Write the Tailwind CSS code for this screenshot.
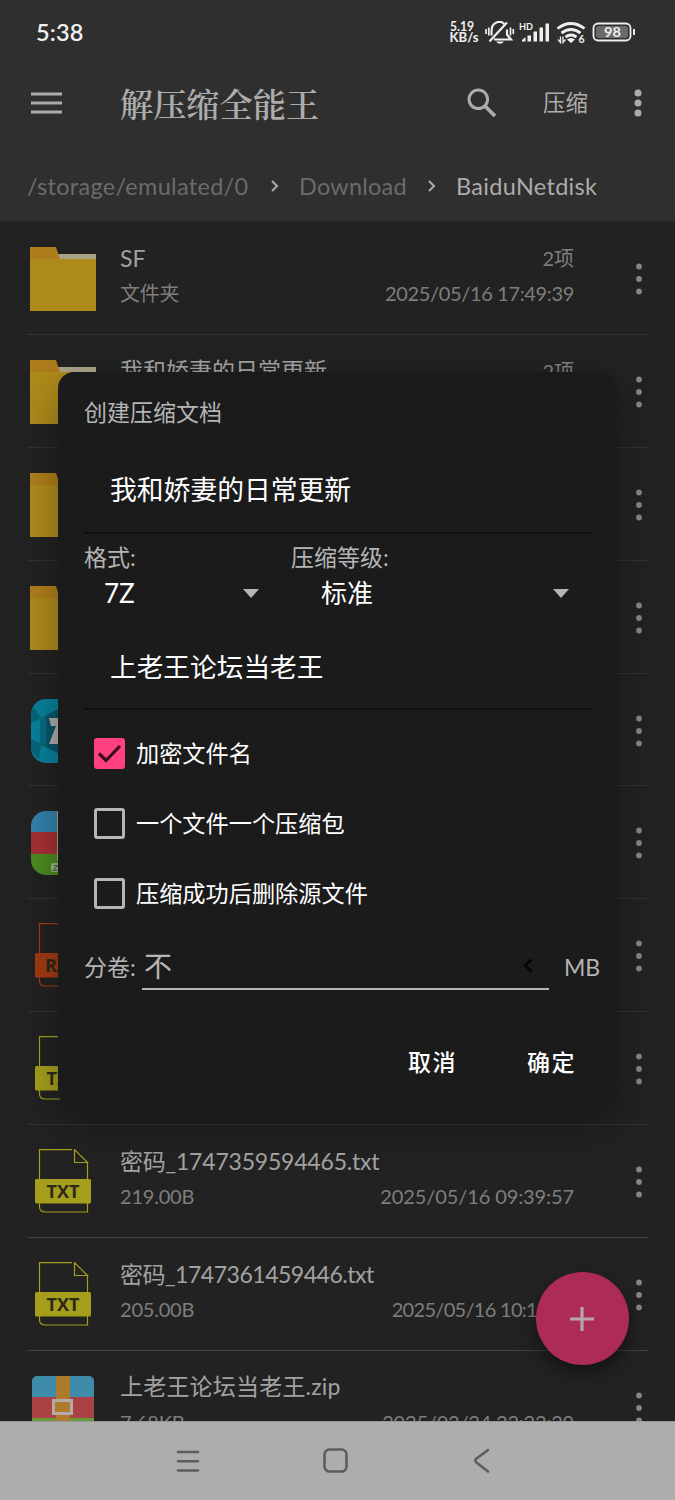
<!DOCTYPE html>
<html lang="zh-CN">
<head>
<meta charset="utf-8">
<title>解压缩全能王</title>
<script src="https://cdn.jsdelivr.net/npm/@tailwindcss/browser@4"></script>
</head>
<body class="bg-[#222222]">
<svg class="absolute size-0">
  <defs>
    <symbol id="folder" viewBox="0 0 66 64"><path d="M20 7h46v12H20z" fill="#aaa287"/><path d="M0 0h26l4 12v10H0z" fill="#ae7d1c"/><path d="M0 12h66v52H0z" fill="#ae8a1b"/></symbol>
    <symbol id="seven" viewBox="0 0 66 64"><rect x="1" width="64" height="64" rx="15" fill="#08809b"/><path d="M4 9l7 10-10 5V12zM1 40l10 5-2 15-8-8z" fill="#056579"/><path d="M10 20l23-13 23 13v24L33 57 10 45z" fill="#075567"/><path d="M10 20l6-3v30l-6-3z" fill="#066a80"/><path d="M19 19h29v8L37 44h10v1H19l7-18h-5z" fill="#aaa"/></symbol>
    <symbol id="rarapp" viewBox="0 0 66 64"><clipPath id="rc"><rect x="1" width="64" height="64" rx="15"/></clipPath><g clip-path="url(#rc)"><path d="M0 0h66v21H0z" fill="#3480ab"/><path d="M0 21h66v22H0z" fill="#a43036"/><path d="M0 43h66v21H0z" fill="#4b8b20"/><path d="M27 0h12v50H27z" fill="#aaa287"/></g><rect x="21" y="52" width="24" height="9" rx="2" fill="#9db28c"/><path d="M23.500 54.500h4l-4 5h4" fill="none" stroke="#4b6b30" stroke-width="1.200"/></symbol>
    <symbol id="doc" viewBox="0 0 66 64"><path d="M42 .6H9.500V58q0 5 6 5H57.500V14M44.500 .6V13.500H57.500z" fill="none" stroke="currentColor" stroke-width="1.200"/><rect x="5" y="30" width="56" height="24.500" rx="1.500" fill="currentColor"/></symbol>
    <symbol id="zip" viewBox="0 0 66 64"><clipPath id="zc"><rect x="2" width="62" height="64" rx="5"/></clipPath><g clip-path="url(#zc)"><path d="M0 0h66v21H0z" fill="#3f8baa"/><path d="M0 21h66v21H0z" fill="#aa4144"/><path d="M0 42h66v22H0z" fill="#679a33"/><path d="M26 0h14v64H26z" fill="#ad7a2e"/></g><rect x="23.500" y="24.500" width="18" height="13" fill="#ad7a2e" stroke="#b3aaa3" stroke-width="3"/></symbol>
    <symbol id="dots" viewBox="0 0 8 34"><circle cx="4" cy="4.500" r="2.900"/><circle cx="4" cy="17" r="2.900"/><circle cx="4" cy="29.500" r="2.900"/></symbol>
  </defs>
</svg>
<div class="relative flex h-[1500px] w-[675px] flex-col overflow-hidden bg-[#222222] font-['Lato','Noto_Sans_CJK_SC',sans-serif] leading-none whitespace-nowrap text-[#acacac]">
  <header class="flex h-[222px] shrink-0 flex-col border-b border-[#282828] bg-[#2f2f2f]">
    <div class="flex h-[64px] items-center justify-between pr-[39px] pl-[36px] text-[#f0f0f0]">
      <div class="pt-[1px] text-[23.500px] font-semibold tracking-[0.200px]">5:38</div>
      <svg class="h-[26px] w-[188px]" viewBox="0 0 188 26" fill="none" stroke="#efefef" font-family="Lato">
        <g fill="#efefef" stroke="none" font-weight="700">
          <text x="2" y="12" font-size="13" textLength="24" lengthAdjust="spacingAndGlyphs">5.19</text>
          <text x="1.500" y="23" font-size="12.500" textLength="29" lengthAdjust="spacingAndGlyphs">KB/s</text>
          <text x="71" y="10.500" font-size="10" textLength="14" lengthAdjust="spacingAndGlyphs">HD</text>
          <text x="130.500" y="24" font-size="10.500">6</text>
          <path d="M74 21l3.500-3v4.500H74zM79.500 16.500h3.500v6h-3.500zM85.500 12.500h3.500v10h-3.500zM91.500 8.500h3.500v14h-3.500zM97.500 4.500h3.500v18h-3.500z"/>
          <path d="M119 20.500q4-3 8 0l-4 3.500zM48 22.500h8q-4 4.500-8 0z"/>
        </g>
        <path d="M43.500 16.500V12q0-7 6-9h4q2 1 3.500 3M59 10.500v5l4 5H46M41.500 22.500L59 3.500" stroke-width="2.200"/>
        <path d="M38 10v5M40.800 8.500v8M62.500 8.500v8M65.300 10v5" stroke-width="1.700"/>
        <path d="M109.500 9.500q13.500-10 27 0M113.500 14q9.500-7 19 0M117.500 18q5.500-4 11 0" stroke-width="2.800"/>
        <path d="M112.500 17.500v6l-2.500-3M115 17.500v6l2.500-3" stroke-width="1.300"/>
        <rect x="145.500" y="4.500" width="37" height="17" rx="4.500" stroke-width="1.800"/>
        <rect x="148" y="7" width="32" height="12" rx="2.500" fill="#6a6a6a" stroke="none"/>
        <path d="M186 10v6" stroke-width="2"/>
        <text x="156" y="18" font-size="14" font-weight="700" fill="#efefef" stroke="none" textLength="17" lengthAdjust="spacingAndGlyphs">98</text>
      </svg>
    </div>
    <div class="flex h-[78px] items-center pl-[31px]">
      <svg class="h-[22px] w-[31px]" viewBox="0 0 31 22" stroke="#acacac" stroke-width="3"><path d="M0 2h31M0 11h31M0 20h31"/></svg>
      <h1 class="ml-[58px] w-[347px] font-['Noto_Serif_CJK_SC','Noto_Sans_CJK_SC',serif] text-[33.200px] font-semibold">解压缩全能王</h1>
      <svg class="h-[30px] w-[30px]" viewBox="0 0 30 30" fill="none" stroke="#acacac"><circle cx="11.300" cy="11.300" r="9.300" stroke-width="3"/><path d="M18 18l10 10" stroke-width="3.800"/></svg>
      <div class="ml-[46px] pt-[2px] text-[22.500px]">压缩</div>
      <svg class="ml-[46px] h-[28px] w-[8px]" viewBox="0 0 8 28" fill="#acacac"><circle cx="4" cy="4" r="3.500"/><circle cx="4" cy="14" r="3.500"/><circle cx="4" cy="24" r="3.500"/></svg>
    </div>
    <nav class="flex h-[80px] items-center pt-[12px] pl-[27px] text-[23.500px] text-[#6b6b6b]">
      <span class="w-[222px] tracking-[0.300px]">/storage/emulated/0</span>
      <svg class="mt-[-3px] ml-[22px] h-[12px] w-[8px]" viewBox="0 0 8 12" fill="none" stroke="#acacac" stroke-width="2"><path d="M1 1l5 5-5 5"/></svg>
      <span class="ml-[20px] w-[108px] tracking-[0.200px]">Download</span>
      <svg class="mt-[-3px] ml-[21px] h-[12px] w-[8px]" viewBox="0 0 8 12" fill="none" stroke="#acacac" stroke-width="2"><path d="M1 1l5 5-5 5"/></svg>
      <span class="ml-[20px] tracking-[0.300px] text-[#acacac]">BaiduNetdisk</span>
    </nav>
  </header>

  <main id="files" class="h-[1199px] shrink-0 overflow-hidden"></main>

  <footer class="flex h-[79px] shrink-0 items-center border-t border-[#999] bg-[#adadad] pb-[1px] pl-[176px]">
    <svg class="h-[24px] w-[24px]" viewBox="0 0 24 24" stroke="#5d5d5d" stroke-width="2.600" stroke-linecap="round"><path d="M2 3h20M2 12.200h20M2 21.500h20"/></svg>
    <svg class="ml-[123px] h-[25px] w-[25px]" viewBox="0 0 25 25" fill="none" stroke="#5d5d5d" stroke-width="2.600"><rect x="1.500" y="1.500" width="22" height="22" rx="5"/></svg>
    <svg class="ml-[125px] h-[25px] w-[17px]" viewBox="0 0 17 25" fill="none" stroke="#5d5d5d" stroke-width="2.600" stroke-linecap="round"><path d="M15 2L3.500 10.500q-2.500 2 0 4L15 23.500"/></svg>
  </footer>

  <button class="absolute top-[1272px] left-[535.500px] flex size-[93px] items-center justify-center rounded-full bg-[#ac2c57] shadow-[0_8px_18px_rgba(0,0,0,0.45)]">
    <svg class="size-[24px]" viewBox="0 0 24 24" stroke="#b8a5ab" stroke-width="3.200"><path d="M12 0v24M0 12h24"/></svg>
  </button>

  <section class="absolute top-[372px] left-[58px] flex h-[735px] w-[559px] flex-col rounded-[16px] bg-[#1b1b1b] pr-[25px] pl-[26px] text-[23px] text-[#b5b5b5] shadow-[0_16px_40px_rgba(0,0,0,0.32)]">
    <h2 class="flex h-[81px] shrink-0 items-center">创建压缩文档</h2>
    <div class="flex h-[81px] shrink-0 items-center border-b-2 border-[#111] pb-[4px] pl-[26px] text-[26.800px] text-white">我和娇妻的日常更新</div>
    <div class="flex h-[92px] shrink-0 pt-[12px]">
      <div class="w-[207px]">
        <div class="h-[23px]">格式:</div>
        <div class="mt-[11px] flex items-center pl-[20px]">
          <span class="w-[139px] text-[26px] text-white">7Z</span>
          <svg class="h-[9px] w-[16px]" viewBox="0 0 16 9" fill="#b5b5b5"><path d="M0 0h16L8 9z"/></svg>
        </div>
      </div>
      <div>
        <div class="h-[23px]">压缩等级:</div>
        <div class="mt-[11px] flex items-center pl-[30px]">
          <span class="w-[231.500px] text-[26px] text-white">标准</span>
          <svg class="h-[9px] w-[16px]" viewBox="0 0 16 9" fill="#b5b5b5"><path d="M0 0h16L8 9z"/></svg>
        </div>
      </div>
    </div>
    <div class="flex h-[84px] shrink-0 items-center border-b-2 border-[#111] pl-[26px] text-[26.700px] text-white">上老王论坛当老王</div>
    <div class="flex shrink-0 flex-col gap-[39px] pt-[28px] pl-[10px] text-[23.200px] text-white">
      <label class="flex h-[31px] items-center gap-[11px]"><svg class="size-[31px]" viewBox="0 0 31 31"><rect width="31" height="31" rx="3" fill="#ff4081"/><path d="M5 15.500l7 7L26 8" fill="none" stroke="#35101d" stroke-width="3.200"/></svg>加密文件名</label>
      <label class="flex h-[31px] items-center gap-[11px]"><span class="size-[31px] rounded-[3px] border-[3px] border-[#b5b5b5]"></span>一个文件一个压缩包</label>
      <label class="flex h-[31px] items-center gap-[11px]"><span class="size-[31px] rounded-[3px] border-[3px] border-[#b5b5b5]"></span>压缩成功后删除源文件</label>
    </div>
    <div class="mt-[33px] flex h-[50px] shrink-0 items-center">
      <span class="w-[58px] shrink-0 pt-[1px]">分卷:</span>
      <div class="mt-[-4px] flex h-[50px] w-[407px] shrink-0 items-center justify-between border-b-2 border-[#b5b5b5] pt-[3px] pr-[16px] pl-[2px] text-[28px]">不
        <svg class="h-[15px] w-[10px]" viewBox="0 0 10 15" fill="none" stroke="#050505" stroke-width="2.800"><path d="M8.500 1.500L2 7.500l6.500 6"/></svg>
      </div>
      <span class="ml-[15px] shrink-0 pt-[1px]">MB</span>
    </div>
    <div class="mt-[59px] flex justify-end gap-[70px] pr-[16px] text-[23px] font-medium tracking-[1.500px] text-white"><span>取消</span><span>确定</span></div>
  </section>
</div>
<script>
const files = [
  ['folder', 'SF', '文件夹', '2项', '2025/05/16 17:49:39', 'tracking-[-0.350px]'],
  ['folder', '我和娇妻的日常更新', '', '2项', ''],
  ['folder', '', '', '', ''],
  ['folder', '', '', '', ''],
  ['seven', '', '', '', ''],
  ['rarapp', '', '', '', ''],
  ['RAR', '', '', '', ''],
  ['TXT', '', '', '', ''],
  ['TXT', '密码_1747359594465.txt', '219.00B', '', '2025/05/16 09:39:57', 'tracking-[-0.100px]', 'tracking-[-0.200px]'],
  ['TXT', '密码_1747361459446.txt', '205.00B', '', '2025/05/16 10:11:41', 'tracking-[-0.700px]', 'tracking-[-0.480px]'],
  ['zip', '上老王论坛当老王.zip', '7.68KB', '', '2025/03/24 22:22:39', 'tracking-[-0.200px]', 'tracking-[0.200px]']
];
const icon = k => (k === 'RAR' || k === 'TXT')
  ? `<div class="mt-[-1px] grid h-[64px] w-[66px] ${k === 'RAR' ? 'text-[#a03a12]' : 'text-[#a49e1c]'}"><svg class="col-start-1 row-start-1 h-[64px] w-[66px]"><use href="#doc"/></svg><span class="col-start-1 row-start-1 pt-[33px] text-center font-['Open_Sans'] text-[18px] font-bold text-[#2b2a17]">${k}</span></div>`
  : `<svg class="h-[64px] w-[66px]"><use href="#${k}"/></svg>`;
document.getElementById('files').innerHTML = files.map(([k, name, sub, count, date, dateTracking = '', nameTracking = ''], i) => `
  <div class="mr-[27px] ml-[27px] flex h-[112.900px] border-b ${i < 8 ? 'border-[#323232]' : 'border-[#404040]'} pt-[25px] pl-[3px]">
    ${icon(k)}
    <div class="mt-[-1px] ml-[24px] flex w-[454px] flex-col text-[20px] text-[#7e7e7e]">
      <div class="flex h-[24px] items-center justify-between"><span class="text-[23px] text-[#a2a2a2] ${nameTracking}">${name}</span><span>${count}</span></div>
      <div class="mt-[11px] flex h-[24px] items-center justify-between"><span class="tracking-[-0.200px]">${sub}</span><span class="${dateTracking}">${date}</span></div>
    </div>
    <svg class="mt-[15px] ml-[60.500px] h-[34px] w-[8px] fill-[#858585]"><use href="#dots"/></svg>
  </div>`).join('');
</script>
</body>
</html>
